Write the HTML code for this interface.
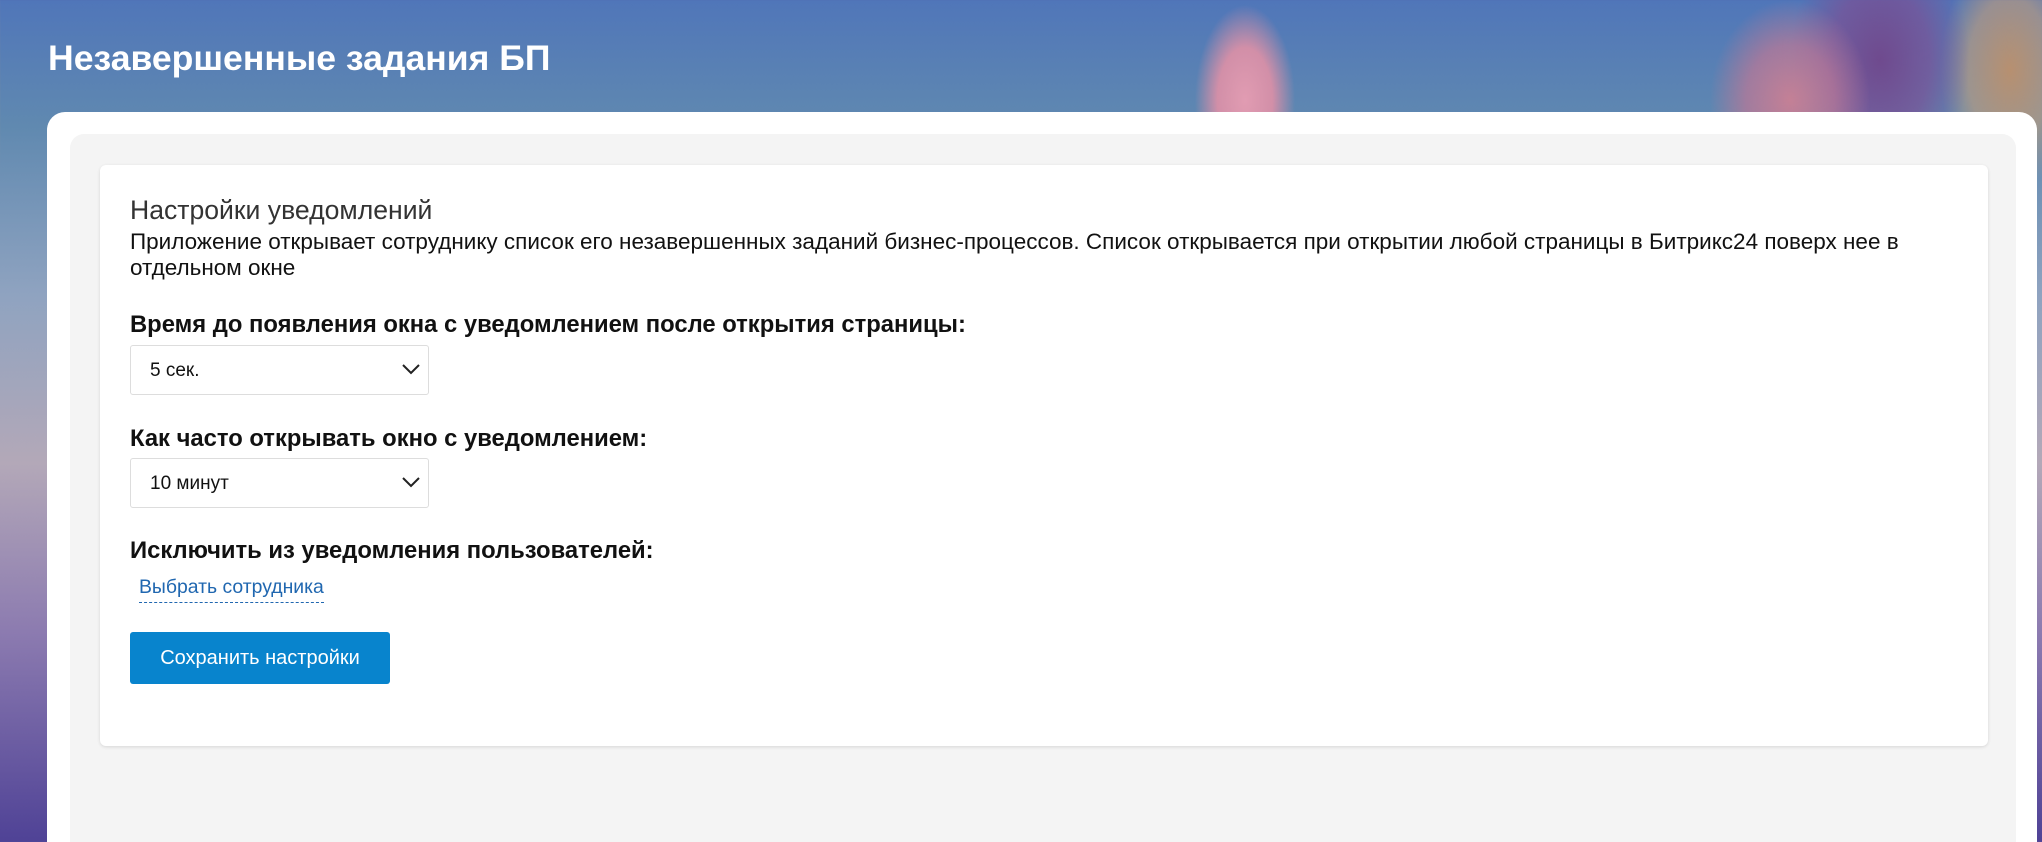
<!DOCTYPE html>
<html><head><meta charset="utf-8"><style>
*{box-sizing:border-box;margin:0;padding:0}
html,body{width:2042px;height:842px;overflow:hidden}
body{font-family:"Liberation Sans","DejaVu Sans",sans-serif;position:relative;
background:
radial-gradient(ellipse 50px 95px at 1245px 100px,#e19cb2 0%,#d28fa8 55%,rgba(210,143,168,0) 100%),
radial-gradient(ellipse 80px 100px at 1790px 100px,#c48096 0%,rgba(190,120,150,.7) 55%,rgba(190,120,150,0) 100%),
radial-gradient(ellipse 90px 130px at 1880px 60px,#6f4a8e 0%,rgba(122,79,149,.7) 55%,rgba(122,79,149,0) 100%),
radial-gradient(ellipse 70px 120px at 2010px 70px,#b79070 0%,rgba(200,160,120,.6) 60%,rgba(200,160,120,0) 100%),
linear-gradient(180deg,#5076b9 0%,#6089b0 15%,#8fa3c0 35%,#b3a8b8 55%,#8c7bb0 75%,#4f4296 100%);}
.title{position:absolute;left:48px;top:38px;color:#fff;font-size:35.6px;font-weight:bold;font-family:"Liberation Sans",sans-serif}
.panel{position:absolute;left:47px;top:112px;width:1990px;height:760px;background:#fff;border-radius:18px}
.grey{position:absolute;left:70px;top:134px;width:1946px;height:740px;background:#f4f4f4;border-radius:14px}
.card{position:absolute;left:100px;top:165px;width:1888px;height:581px;background:#fff;border-radius:6px;box-shadow:0 1px 3px rgba(0,0,0,.12)}
.abs{position:absolute;white-space:nowrap}
h2{font-weight:normal;font-size:26.6px;color:#333}
.p{font-size:22.5px;color:#111;line-height:26px;white-space:normal;width:1810px}
.lbl{font-size:23.8px;font-weight:bold;color:#111}
.sel{position:absolute;left:130px;width:299px;height:50px;border:1px solid #ddd;border-radius:3px;background:#fff;font-size:19px;color:#111;padding:14px 0 0 19px}
.sel svg{position:absolute;right:8px;top:17px}
.link{font-size:19.4px;color:#2067b0;border-bottom:1px dashed #2067b0;padding-bottom:4px}
.btn{position:absolute;left:130px;top:632px;width:260px;height:52px;background:#0884cd;border-radius:3px;color:#fff;font-size:20px;text-align:center;line-height:52px}
</style></head><body>
<div class="title">Незавершенные задания БП</div>
<div class="panel"></div>
<div class="grey"></div>
<div class="card"></div>
<h2 class="abs" style="left:130px;top:195px">Настройки уведомлений</h2>
<div class="abs p" style="left:130px;top:229px">Приложение открывает сотруднику список его незавершенных заданий бизнес-процессов. Список открывается при открытии любой страницы в Битрикс24 поверх нее в отдельном окне</div>
<div class="abs lbl" style="left:130px;top:311px">Время до появления окна с уведомлением после открытия страницы:</div>
<div class="sel" style="top:345px">5 сек.<svg width="18" height="12" viewBox="0 0 18 12"><path d="M1 2l8 8 8-8" fill="none" stroke="#222" stroke-width="2"/></svg></div>
<div class="abs lbl" style="left:130px;top:425px">Как часто открывать окно с уведомлением:</div>
<div class="sel" style="top:458px">10 минут<svg width="18" height="12" viewBox="0 0 18 12"><path d="M1 2l8 8 8-8" fill="none" stroke="#222" stroke-width="2"/></svg></div>
<div class="abs lbl" style="left:130px;top:537px">Исключить из уведомления пользователей:</div>
<div class="abs" style="left:139px;top:576px"><span class="link">Выбрать сотрудника</span></div>
<div class="btn">Сохранить настройки</div>
</body></html>
